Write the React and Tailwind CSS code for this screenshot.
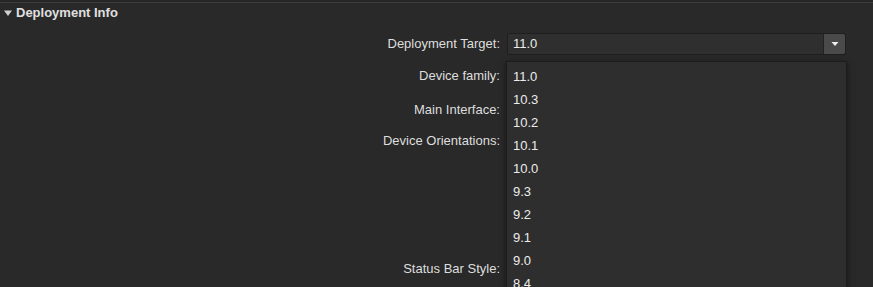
const versions = ['11.0', '10.3', '10.2', '10.1', '10.0', '9.3', '9.2', '9.1', '9.0', '8.4'];

const Label = ({ children, className = '' }) => (
  <div className={`w-[500px] text-right ${className}`}>{children}</div>
);

export default function App() {
  return (
    <div className="w-[873px] h-[287px] overflow-hidden bg-[#292929] text-[#dedede] text-[13px] font-['Liberation_Sans',Arial,sans-serif] relative">
      <div className="h-[3px] border-b border-[#3c3c3c] bg-[#262626]" />
      {/* Section header */}
      <div className="flex items-center h-[20px] pl-[4px] gap-[4px]">
        <svg width="8" height="7" viewBox="0 0 8 7" className="mt-[1px]">
          <path d="M0 0.5 L8 0.5 L4 6 Z" fill="#d0d0d0" />
        </svg>
        <span className="font-bold text-[13px] text-[#e0e0e0]">Deployment Info</span>
      </div>

      {/* Label column */}
      <div className="flex flex-col mt-[10px]">
        <div className="flex items-center h-[22px]">
          <Label>Deployment Target:</Label>
          <div className="ml-[7px] w-[339px] h-[22px] flex border border-[#1f1f1f] rounded-[2px] bg-[#2f2f2f]">
            <div className="flex-1 flex items-center pl-[5px] text-[#ececec]">11.0</div>
            <div className="w-[22px] bg-[#4a4a4a] border-l border-[#222] flex items-center justify-center rounded-r-[2px]">
              <svg width="8" height="6" viewBox="0 0 8 6">
                <path d="M0.5 1 L7.5 1 L4 5 Z" fill="#f0f0f0" />
              </svg>
            </div>
          </div>
        </div>
        <div className="flex items-center h-[22px] mt-[10px]">
          <Label>Device family:</Label>
        </div>
        <div className="flex items-center h-[22px] mt-[12px]">
          <Label>Main Interface:</Label>
        </div>
        <div className="flex items-center h-[22px] mt-[9px]">
          <Label>Device Orientations:</Label>
        </div>
        <div className="flex items-center h-[22px] mt-[106px]">
          <Label>Status Bar Style:</Label>
        </div>
      </div>

      {/* Open dropdown menu */}
      <div className="absolute left-[506px] top-[61px] w-[341px] h-[240px] bg-[#2e2e2e] border border-[#1c1c1c] shadow-[0_2px_6px_rgba(0,0,0,0.5)]">
        <div className="flex flex-col pt-[3px]">
          {versions.map((v) => (
            <div key={v} className="h-[23px] flex items-center pl-[6px] text-[#ececec]">{v}</div>
          ))}
        </div>
      </div>
    </div>
  );
}
